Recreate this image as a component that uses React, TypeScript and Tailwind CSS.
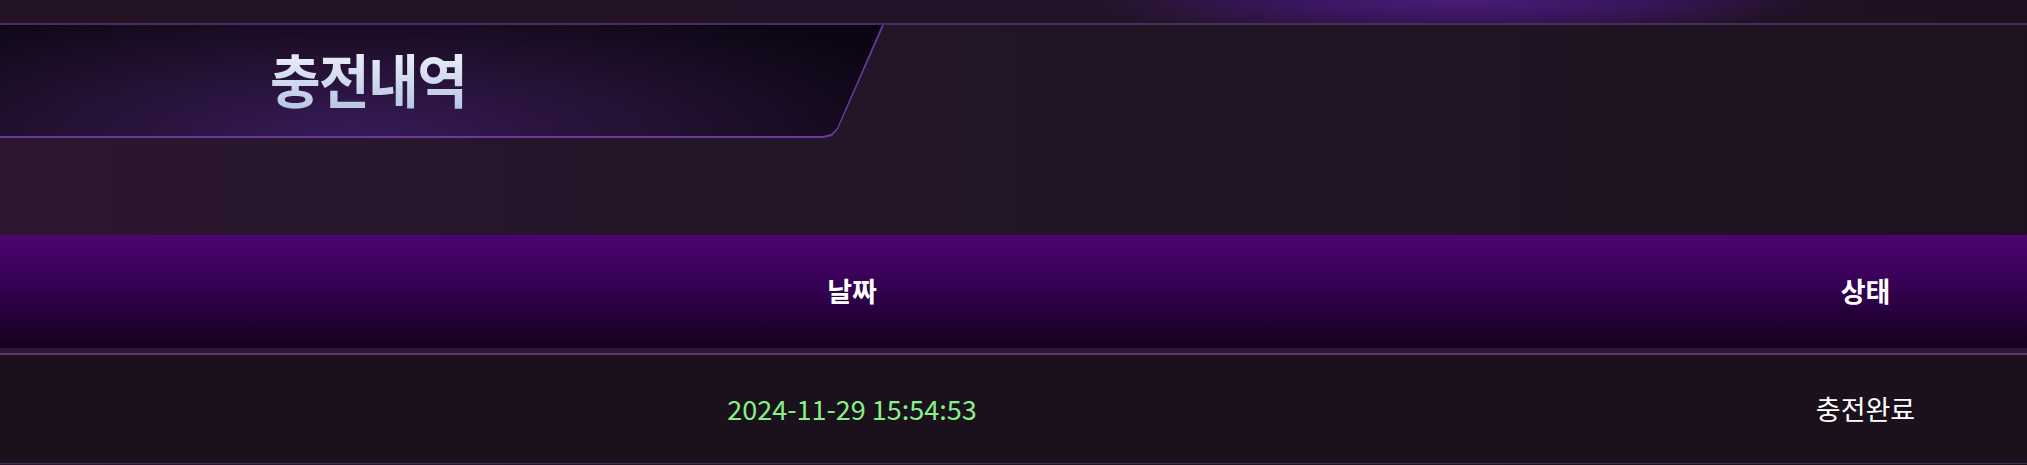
import React from "react";

const font = { fontFamily: '"Noto Sans CJK KR", "Noto Sans", sans-serif' };

const rows = [{ date: "2024-11-29 15:54:53", status: "충전완료" }];

const App = () => {
    return (
        <div
            style={font}
            className="w-full h-[465px] overflow-hidden bg-[linear-gradient(to_right,#2b1730,#221526_50%,#1e1220)] flex flex-col"
        >
            {/* top strip */}
            <div className="h-[23px] shrink-0 bg-[radial-gradient(ellipse_360px_40px_at_1460px_0px,#4a1c78_0%,#3a1660_45%,transparent_100%),linear-gradient(to_right,#221224,#24142a_60%,#1e1020)]" />
            <div className="h-[2px] shrink-0 bg-[#4a2d5c]" />

            {/* title banner */}
            <div className="h-[210px] shrink-0 flex flex-col">
                <div className="w-[884px] h-[113px] bg-[#6a3a9c] [clip-path:polygon(0_0,884px_0,838px_104px,832px_111px,824px_113px,0_100%)]">
                    <div className="w-[882px] h-[111px] flex items-center pl-[270px] bg-[radial-gradient(ellipse_600px_150px_at_40%_100%,#361a58_0%,#22102f_55%,#0c0614_100%)] [clip-path:polygon(0_0,882px_0,837px_103px,831px_109px,823px_111px,0_100%)]">
                        <h1 className="text-[55px] font-bold tracking-[-1.5px] leading-none pb-1 scale-y-[1.06] bg-[linear-gradient(to_bottom,#eef0fa,#b4c4e2)] bg-clip-text text-transparent">
                            충전내역
                        </h1>
                    </div>
                </div>
            </div>

            {/* table header */}
            <div className="h-[113px] shrink-0 grid grid-cols-[1704px_1fr] items-center bg-[linear-gradient(to_bottom,#4e0472,#350253_45%,#13001b)] text-white text-[27px] font-bold">
                <div className="text-center">날짜</div>
                <div className="text-center">상태</div>
            </div>
            <div className="h-[5px] shrink-0 bg-[#2c1838]" />
            <div className="h-[2px] shrink-0 bg-[#5e3a6e]" />

            {rows.map((r, i) => (
                <div
                    key={i}
                    className="h-[109px] shrink-0 grid grid-cols-[1704px_1fr] items-center bg-[#1b111c] border-b border-[#4a2a58] text-[27px]"
                >
                    <div className="text-center text-[#86f286]">{r.date}</div>
                    <div className="text-center text-white">{r.status}</div>
                </div>
            ))}
        </div>
    );
};

export default App;
